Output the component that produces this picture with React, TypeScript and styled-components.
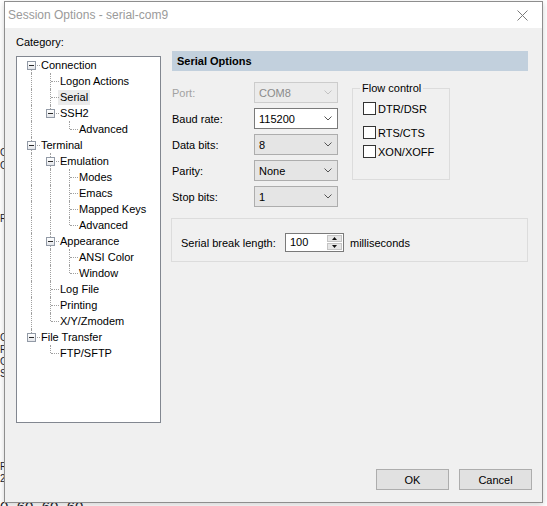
import React from "react";
import styled, { createGlobalStyle, css } from "styled-components";

const UI_FONT = `"Liberation Sans", Arial, sans-serif`;
const TREE_INDENT = 19;
const ROW_HEIGHT = 16;

const GlobalStyle = createGlobalStyle`
  html, body {
    margin: 0;
    padding: 0;
    background: #ffffff;
  }
  body {
    width: 547px;
    height: 506px;
    overflow: hidden;
    position: relative;
    font-family: ${UI_FONT};
    font-size: 11px;
    color: #000000;
  }
`;

/* ---------- desktop behind the dialog ---------- */

const Backdrop = styled.div`
  display: flex;
  flex-direction: column;
  align-items: flex-start;
  color: #1c1c2c;
`;

const BackLine = styled.div<{ $gap: number; $big?: boolean }>`
  margin-top: ${(p) => p.$gap}px;
  white-space: nowrap;
  font-size: ${(p) => (p.$big ? 15 : 10)}px;
  line-height: ${(p) => (p.$big ? 15 : 12)}px;
  height: ${(p) => (p.$big ? 15 : 12)}px;
`;

/* ---------- dialog window ---------- */

const Window = styled.div`
  position: absolute;
  left: 4px;
  top: 1px;
  width: 539px;
  height: 502px;
  box-sizing: border-box;
  border: 1px solid #8e8e8e;
  background: #f0f0f0;
  display: flex;
  flex-direction: column;
  box-shadow: 0 2px 6px rgba(0, 0, 0, 0.18);
`;

const TitleBar = styled.div`
  height: 26px;
  flex: none;
  background: #ffffff;
  display: flex;
  align-items: center;
  justify-content: space-between;
  padding-left: 3px;
`;

const Title = styled.span`
  font-size: 12px;
  color: #9a9a9a;
`;

const CloseButton = styled.div`
  width: 40px;
  height: 26px;
  display: flex;
  align-items: center;
  justify-content: center;
`;

const Body = styled.div`
  flex: 1;
  display: flex;
  flex-direction: column;
  padding: 7px 0 12px 11px;
`;

const Main = styled.div`
  flex: 1;
  display: flex;
  gap: 11px;
  padding-right: 14px;
`;

const LeftColumn = styled.div`
  width: 145px;
  flex: none;
  display: flex;
  flex-direction: column;
`;

const CategoryLabel = styled.div`
  line-height: 14px;
  height: 14px;
`;

const Tree = styled.div`
  margin-top: 7px;
  height: 367px;
  box-sizing: border-box;
  border: 1px solid #828790;
  background: #ffffff;
  padding-left: 5px;
`;

const TreeRow = styled.div`
  display: flex;
  height: ${ROW_HEIGHT}px;
`;

const dottedVertical = css`
  content: "";
  position: absolute;
  left: 9px;
  border-left: 1px dotted #a0a0a0;
`;

const Guide = styled.span<{ $line: boolean }>`
  position: relative;
  width: ${TREE_INDENT}px;
  flex: none;
  ${(p) =>
    p.$line &&
    css`
      &::before {
        ${dottedVertical};
        top: 0;
        bottom: 0;
      }
    `}
`;

const Joint = styled.span<{ $first: boolean; $last: boolean }>`
  position: relative;
  width: ${TREE_INDENT}px;
  flex: none;
  &::before {
    ${dottedVertical};
    top: ${(p) => (p.$first ? ROW_HEIGHT / 2 : 0)}px;
    bottom: ${(p) => (p.$last ? ROW_HEIGHT / 2 : 0)}px;
  }
  &::after {
    content: "";
    position: absolute;
    left: 10px;
    right: 1px;
    top: 8px;
    border-top: 1px dotted #a0a0a0;
  }
`;

const Expander = styled.span`
  position: absolute;
  left: 5px;
  top: 4px;
  width: 9px;
  height: 9px;
  box-sizing: border-box;
  border: 1px solid #929aa6;
  background: linear-gradient(#ffffff, #e4e6ea);
  z-index: 1;
  &::after {
    content: "";
    position: absolute;
    left: 1px;
    top: 3px;
    width: 5px;
    height: 1px;
    background: #2a2a2a;
  }
`;

const NodeLabel = styled.span<{ $selected: boolean }>`
  margin-left: -2px;
  padding: 0 2px;
  line-height: 15px;
  height: 15px;
  margin-top: 1px;
  white-space: nowrap;
  background: ${(p) => (p.$selected ? "#ebebeb" : "transparent")};
`;

const RightColumn = styled.div`
  flex: 1;
  margin-top: 16px;
  display: flex;
  flex-direction: column;
`;

const SectionHeader = styled.div`
  height: 20px;
  line-height: 20px;
  background: #c2d0dd;
  font-weight: bold;
  padding-left: 5px;
`;

const FormRow = styled.div`
  display: flex;
  align-items: flex-start;
  margin-top: 11px;
`;

const Fields = styled.div`
  display: grid;
  grid-template-columns: 82px 84px;
  grid-auto-rows: 21px;
  row-gap: 5px;
  align-items: center;
`;

const FieldLabel = styled.span<{ $disabled?: boolean }>`
  color: ${(p) => (p.$disabled ? "#a2a2a2" : "#000000")};
`;

type ComboVariant = "edit" | "list" | "disabled";

const comboLooks: Record<ComboVariant, ReturnType<typeof css>> = {
  edit: css`
    background: #ffffff;
    border-color: #7a7a7a;
  `,
  list: css`
    background: #e5e5e5;
    border-color: #adadad;
  `,
  disabled: css`
    background: #ebebeb;
    border-color: #cccccc;
    color: #8a8a8a;
  `,
};

const Combo = styled.div<{ $variant: ComboVariant }>`
  height: 21px;
  box-sizing: border-box;
  border: 1px solid;
  display: flex;
  align-items: center;
  justify-content: space-between;
  padding: 0 5px 0 4px;
  ${(p) => comboLooks[p.$variant]};
`;

const FlowGroup = styled.div`
  position: relative;
  margin: 6px 0 0 14px;
  width: 98px;
  height: 92px;
  box-sizing: border-box;
  border: 1px solid #dcdcdc;
  padding: 0 0 0 10px;
  display: flex;
  flex-direction: column;
`;

const Legend = styled.span`
  position: absolute;
  top: -7px;
  left: 7px;
  padding: 0 2px;
  line-height: 13px;
  background: #f0f0f0;
`;

const CheckRow = styled.label<{ $gap: number }>`
  display: flex;
  align-items: center;
  gap: 2px;
  height: 13px;
  margin-top: ${(p) => p.$gap}px;
`;

const CheckBox = styled.span`
  width: 13px;
  height: 13px;
  box-sizing: border-box;
  border: 1px solid #333333;
  background: #ffffff;
  flex: none;
`;

const BreakGroup = styled.div`
  margin: 11px 0 0 -1px;
  border: 1px solid #dcdcdc;
  padding: 14px 9px 9px 9px;
  display: flex;
  align-items: center;
`;

const BreakLabel = styled.span`
  width: 104px;
`;

const Spin = styled.div`
  display: flex;
  height: 19px;
  box-sizing: border-box;
  border: 1px solid #7a7a7a;
  background: #ffffff;
`;

const SpinInput = styled.span`
  width: 36px;
  padding-left: 4px;
  line-height: 17px;
`;

const SpinButtons = styled.div`
  width: 17px;
  display: flex;
  flex-direction: column;
  gap: 1px;
  padding: 1px;
  box-sizing: border-box;
`;

const SpinButton = styled.div`
  flex: 1;
  background: #e6e6e6;
  border: 1px solid #c4c4c4;
  display: flex;
  align-items: center;
  justify-content: center;
`;

const Units = styled.span`
  margin-left: 6px;
`;

const Footer = styled.div`
  display: flex;
  justify-content: flex-end;
  gap: 10px;
  padding-right: 10px;
`;

const Button = styled.div`
  width: 73px;
  height: 21px;
  box-sizing: border-box;
  border: 1px solid #adadad;
  background: #e1e1e1;
  display: flex;
  align-items: center;
  justify-content: center;
`;

/* ---------- data ---------- */

type TreeNode = { label: string; selected?: boolean; children?: TreeNode[] };

const categories: TreeNode[] = [
  {
    label: "Connection",
    children: [
      { label: "Logon Actions" },
      { label: "Serial", selected: true },
      { label: "SSH2", children: [{ label: "Advanced" }] },
    ],
  },
  {
    label: "Terminal",
    children: [
      {
        label: "Emulation",
        children: [
          { label: "Modes" },
          { label: "Emacs" },
          { label: "Mapped Keys" },
          { label: "Advanced" },
        ],
      },
      {
        label: "Appearance",
        children: [{ label: "ANSI Color" }, { label: "Window" }],
      },
      { label: "Log File" },
      { label: "Printing" },
      { label: "X/Y/Zmodem" },
    ],
  },
  { label: "File Transfer", children: [{ label: "FTP/SFTP" }] },
];

type FlatRow = {
  label: string;
  selected: boolean;
  first: boolean;
  last: boolean;
  hasKids: boolean;
  guides: boolean[];
};

const flatten = (nodes: TreeNode[], guides: boolean[] = []): FlatRow[] =>
  nodes.flatMap((node, i) => {
    const last = i === nodes.length - 1;
    const row: FlatRow = {
      label: node.label,
      selected: !!node.selected,
      first: guides.length === 0 && i === 0,
      last,
      hasKids: !!node.children?.length,
      guides,
    };
    return [
      row,
      ...(node.children ? flatten(node.children, [...guides, !last]) : []),
    ];
  });

const rows = flatten(categories);

const fields: { label: string; value: string; variant: ComboVariant }[] = [
  { label: "Port:", value: "COM8", variant: "disabled" },
  { label: "Baud rate:", value: "115200", variant: "edit" },
  { label: "Data bits:", value: "8", variant: "list" },
  { label: "Parity:", value: "None", variant: "list" },
  { label: "Stop bits:", value: "1", variant: "list" },
];

const flowOptions = [
  { label: "DTR/DSR", gap: 13 },
  { label: "RTS/CTS", gap: 11 },
  { label: "XON/XOFF", gap: 6 },
];

// only the first letters of the text behind the dialog peek out at the left edge
const backLines = [
  { text: "C", gap: 147 },
  { text: "C", gap: 1 },
  { text: "R", gap: 41 },
  { text: "C", gap: 107 },
  { text: "R", gap: 0 },
  { text: "C", gap: 0 },
  { text: "S", gap: 0 },
  { text: "R", gap: 81 },
  { text: "2", gap: 0 },
];

/* ---------- pieces ---------- */

const Chevron = ({ color }: { color: string }) => (
  <svg width="8" height="5" viewBox="0 0 8 5">
    <polyline points="0.5,0.5 4,4 7.5,0.5" fill="none" stroke={color} strokeWidth="1" />
  </svg>
);

const Triangle = ({ up }: { up?: boolean }) => (
  <svg width="5" height="3" viewBox="0 0 5 3">
    <polygon points={up ? "0,3 5,3 2.5,0" : "0,0 5,0 2.5,3"} fill="#111" />
  </svg>
);

const CloseIcon = () => (
  <svg width="11" height="11" viewBox="0 0 11 11">
    <path d="M0.5 0.5 L10.5 10.5 M10.5 0.5 L0.5 10.5" stroke="#7a7a7a" strokeWidth="1" />
  </svg>
);

const App = () => (
  <>
    <GlobalStyle />
    <Backdrop>
      {backLines.map((l, i) => (
        <BackLine key={i} $gap={l.gap}>
          {l.text}
        </BackLine>
      ))}
      <BackLine $gap={14} $big>
        0, 60, 60, 60
      </BackLine>
    </Backdrop>

    <Window>
      <TitleBar>
        <Title>Session Options - serial-com9</Title>
        <CloseButton>
          <CloseIcon />
        </CloseButton>
      </TitleBar>
      <Body>
        <Main>
          <LeftColumn>
            <CategoryLabel>Category:</CategoryLabel>
            <Tree>
              {rows.map((row, i) => (
                <TreeRow key={i}>
                  {row.guides.map((g, j) => (
                    <Guide key={j} $line={g} />
                  ))}
                  <Joint $first={row.first} $last={row.last}>
                    {row.hasKids && <Expander />}
                  </Joint>
                  <NodeLabel $selected={row.selected}>{row.label}</NodeLabel>
                </TreeRow>
              ))}
            </Tree>
          </LeftColumn>

          <RightColumn>
            <SectionHeader>Serial Options</SectionHeader>
            <FormRow>
              <Fields>
                {fields.map((f) => (
                  <React.Fragment key={f.label}>
                    <FieldLabel $disabled={f.variant === "disabled"}>{f.label}</FieldLabel>
                    <Combo $variant={f.variant}>
                      <span>{f.value}</span>
                      <Chevron color={f.variant === "disabled" ? "#c2c2c2" : "#555555"} />
                    </Combo>
                  </React.Fragment>
                ))}
              </Fields>
              <FlowGroup>
                <Legend>Flow control</Legend>
                {flowOptions.map((o) => (
                  <CheckRow key={o.label} $gap={o.gap}>
                    <CheckBox />
                    {o.label}
                  </CheckRow>
                ))}
              </FlowGroup>
            </FormRow>
            <BreakGroup>
              <BreakLabel>Serial break length:</BreakLabel>
              <Spin>
                <SpinInput>100</SpinInput>
                <SpinButtons>
                  <SpinButton>
                    <Triangle up />
                  </SpinButton>
                  <SpinButton>
                    <Triangle />
                  </SpinButton>
                </SpinButtons>
              </Spin>
              <Units>milliseconds</Units>
            </BreakGroup>
          </RightColumn>
        </Main>
        <Footer>
          <Button>OK</Button>
          <Button>Cancel</Button>
        </Footer>
      </Body>
    </Window>
  </>
);

export default App;
